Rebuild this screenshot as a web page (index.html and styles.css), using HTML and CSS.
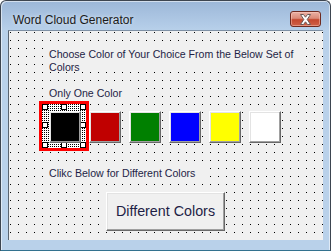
FILE: index.html
```html
<!DOCTYPE html>
<html>
<head>
<meta charset="utf-8">
<title>Word Cloud Generator</title>
<link rel="stylesheet" href="styles.css">
</head>
<body>
<div class="window">
  <div class="titlebar">
    <span class="title">Word Cloud Generator</span>
    <div class="close">
      <svg width="13" height="11" viewBox="0 0 13 11">
        <path d="M1.5 0.5 H4.5 L6.5 3.2 L8.5 0.5 H11.5 L8.2 5.5 L11.5 10.5 H8.5 L6.5 7.8 L4.5 10.5 H1.5 L4.8 5.5 Z" fill="#ffffff" stroke="#6a5a58" stroke-width="1" stroke-linejoin="round"/>
      </svg>
    </div>
  </div>
  <div class="client">
    <div class="label choose">Choose Color of Your Choice From the Below Set of Colors</div>
    <div class="label only">Only One Color</div>
    <div class="swatches">
      <div class="pick">
        <div class="selframe">
          <span class="handle h-tl"></span>
          <span class="handle h-tm"></span>
          <span class="handle h-tr"></span>
          <span class="handle h-ml"></span>
          <span class="handle h-mr"></span>
          <span class="handle h-bl"></span>
          <span class="handle h-bm"></span>
          <span class="handle h-br"></span>
        </div>
        <div class="swatch black"></div>
      </div>
      <div class="swatch red"></div>
      <div class="swatch green"></div>
      <div class="swatch blue"></div>
      <div class="swatch yellow"></div>
      <div class="swatch white"></div>
    </div>
    <div class="label clikc">Clikc Below for Different Colors</div>
    <div class="btn">Different Colors</div>
  </div>
</div>
</body>
</html>
```
FILE: styles.css
```css
html, body {
  margin: 0;
  padding: 0;
  background: #ffffff;
}

.window {
  width: 331px;
  height: 251px;
  box-sizing: border-box;
  border: 1px solid #3d4550;
  border-bottom-color: #33728f;
  border-radius: 6px 6px 0 0;
  padding: 0 7px 10px 7px;
  background: linear-gradient(to bottom, #9cb7d8 0px, #b4cde8 26px, #b9d1ea 30px, #b9d1ea 100%);
  box-shadow: inset 1px 1px 0 rgba(255,255,255,0.55), inset -1px 0 0 rgba(255,255,255,0.55);
  display: flex;
  flex-direction: column;
  font-family: "Liberation Sans", Arial, sans-serif;
}

.titlebar {
  height: 29px;
  display: flex;
  align-items: flex-start;
  justify-content: space-between;
  padding: 10px 2px 0 5px;
  box-sizing: border-box;
}

.title {
  font-size: 12px;
  line-height: 14px;
  margin-top: 2px;
  color: #1a1a1a;
  text-shadow: 0 0 4px rgba(255,255,255,0.7);
}

.close {
  width: 31px;
  height: 16px;
  box-sizing: border-box;
  border: 1px solid #6e2a20;
  border-radius: 3px;
  background: linear-gradient(to bottom, #eab0a4 0%, #db8a78 45%, #c4482f 55%, #cf6148 100%);
  box-shadow: inset 0 0 0 1px rgba(255,210,200,0.45);
  display: flex;
  align-items: center;
  justify-content: center;
}

.close svg {
  display: block;
}

.client {
  flex: 1;
  border-left: 1px solid #5a6470;
  border-top: 1px solid #7d8fa3;
  background-color: #f0f0f0;
  background-image: conic-gradient(from 270deg at 1px 1px, #000000 90deg, transparent 0);
  background-size: 8px 8px;
  background-position: 1px 1px;
  padding: 13px 0 0 40px;
  display: flex;
  flex-direction: column;
  align-items: flex-start;
}

.label {
  font-size: 10.6px;
  line-height: 13px;
  color: #1e1e46;
  background: #f0f0f0;
  box-sizing: border-box;
  margin-left: -2px;
  padding-left: 2px;
}

.choose {
  width: 256px;
  height: 24px;
  padding-top: 4px;
  overflow: visible;
}

.only {
  margin-top: 19px;
  width: 90px;
  height: 13px;
}

.swatches {
  margin-top: 11px;
  display: flex;
  gap: 8px;
}

.pick {
  position: relative;
}

.swatch {
  width: 32px;
  height: 32px;
  box-sizing: border-box;
  border: 1px solid;
  border-color: #ffffff #696969 #696969 #ffffff;
  box-shadow: inset -1px -1px 0 #a0a0a0, inset 1px 1px 0 #e3e3e3;
}

.pick .swatch {
  position: relative;
}

.black { background: #000000; }
.red { background: #c00000; }
.green { background: #008000; }
.blue { background: #0000ff; }
.yellow { background: #ffff00; }
.white { background: #ffffff; }

.selframe {
  position: absolute;
  left: -10px;
  top: -10px;
  width: 50px;
  height: 50px;
  box-sizing: border-box;
  border: 3px solid #ff0000;
  background-color: #ffffff;
  background-image: conic-gradient(from 270deg at 1px 1px, #000000 90deg, transparent 0);
  background-size: 2px 2px;
}

.handle {
  position: absolute;
  width: 6px;
  height: 6px;
  box-sizing: border-box;
  border: 1px solid #000000;
  background: #ffffff;
}

.h-tl { left: 0; top: 0; }
.h-tm { left: 19px; top: 0; }
.h-tr { left: 38px; top: 0; }
.h-ml { left: 0; top: 18px; }
.h-mr { left: 38px; top: 18px; }
.h-bl { left: 0; top: 38px; }
.h-bm { left: 19px; top: 38px; }
.h-br { left: 38px; top: 38px; }

.clikc {
  margin-top: 21px;
  width: 158px;
  height: 16px;
  padding-top: 3px;
}

.btn {
  margin-top: 12px;
  margin-left: 57px;
  width: 119px;
  height: 39px;
  box-sizing: border-box;
  border: 1px solid;
  border-color: #ffffff #696969 #696969 #ffffff;
  box-shadow: inset -1px -1px 0 #a0a0a0, inset 1px 1px 0 #e3e3e3;
  background: #f0f0f0;
  font-size: 14.3px;
  color: #1e1e46;
  display: flex;
  align-items: center;
  justify-content: center;
  padding-bottom: 1px;
}
```
